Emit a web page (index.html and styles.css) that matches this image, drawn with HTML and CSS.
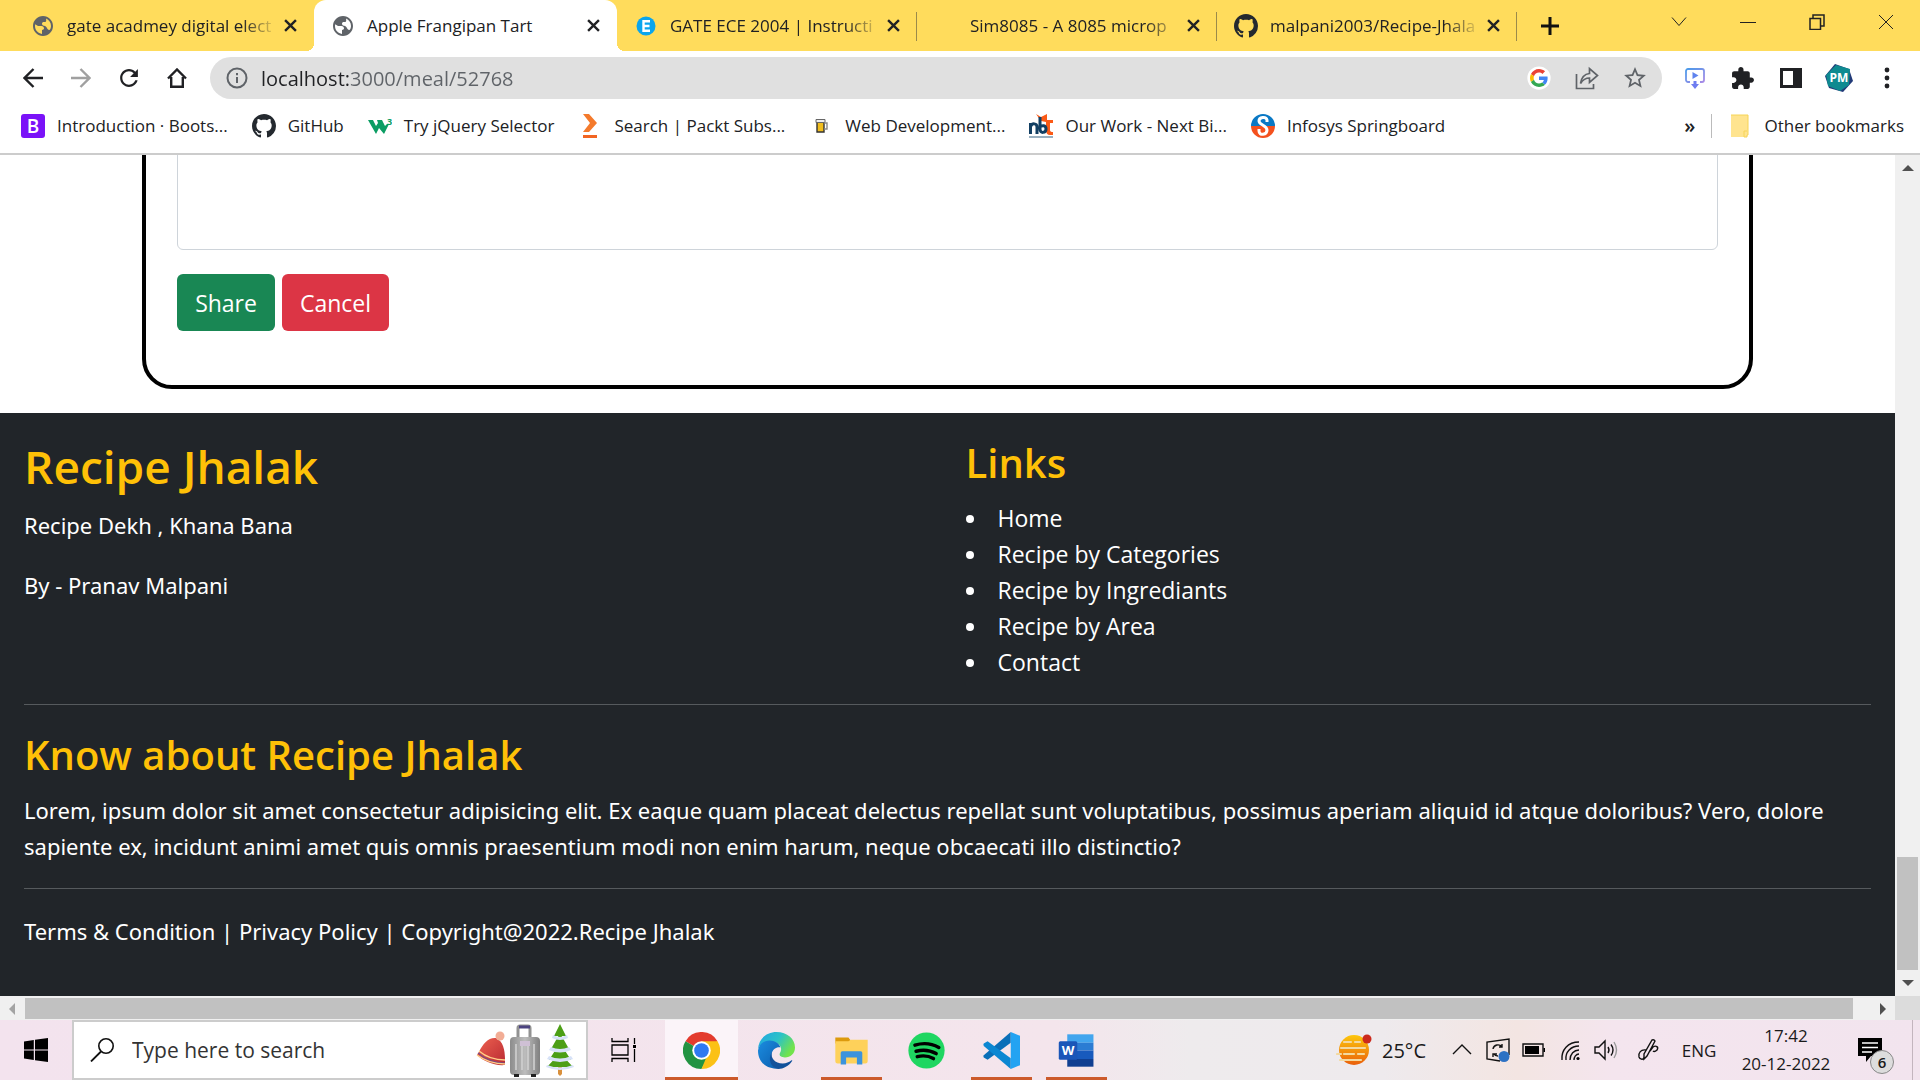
FILE: index.html
```html
<!DOCTYPE html>
<html lang="en">
<head>
<meta charset="utf-8">
<title>Apple Frangipan Tart</title>
<link rel="stylesheet" href="styles.css">
</head>
<body>
<svg class="defs" aria-hidden="true">
  <symbol id="globe" viewBox="0 0 24 24"><path d="M12 2C6.480 2 2 6.480 2 12s4.480 10 10 10 10-4.480 10-10S17.520 2 12 2zm-1 17.930c-3.950-.490-7-3.850-7-7.930 0-.620.080-1.210.210-1.790L7 12h3.500c1.500 0 2.500 1 2.500 2.300 0 1.200-1 1.700-2 1.700v3.930zm5.500-4.930c-.700-2-2-3-3.500-3.200-1.500-.200-2-1-2-2.200 0-1 .700-1.600 2-1.600h1.200c1 0 1.300-1 .800-3.400 2.930 1.190 5 4.060 5 7.410 0 1.500-.500 3-1.500 4-.800 0-1.500-.300-2-1.010z"/></symbol>
  <symbol id="x" viewBox="0 0 12 12"><path d="M1 1l10 10M11 1L1 11" stroke="currentColor" stroke-width="2.200" fill="none"/></symbol>
  <symbol id="github" viewBox="0 0 16 16"><path d="M8 0C3.580 0 0 3.580 0 8c0 3.540 2.290 6.530 5.470 7.590.4.070.55-.17.55-.38 0-.19-.01-.82-.01-1.490-2.010.37-2.530-.49-2.690-.94-.09-.23-.48-.94-.82-1.130-.28-.15-.68-.52-.01-.53.63-.01 1.080.58 1.230.82.72 1.210 1.870.87 2.330.66.070-.52.28-.87.51-1.070-1.780-.2-3.640-.89-3.640-3.950 0-.87.31-1.590.82-2.150-.08-.2-.36-1.020.08-2.120 0 0 .67-.21 2.200.82.64-.18 1.320-.27 2-.27s1.360.09 2 .27c1.530-1.040 2.200-.82 2.200-.82.44 1.100.16 1.920.08 2.120.51.56.82 1.270.82 2.150 0 3.070-1.870 3.750-3.650 3.950.29.25.54.73.54 1.480 0 1.070-.01 1.930-.01 2.200 0 .21.15.46.55.38A8.010 8.010 0 0 0 16 8c0-4.420-3.580-8-8-8z"/></symbol>
</svg>

<header class="chrome">
  <div class="tabstrip">
    <div class="tabs">
      <div class="tab">
        <svg class="tab-icon gray"><use href="#globe"/></svg>
        <span class="tab-title fade">gate acadmey digital elect</span>
        <button class="tab-close" aria-label="Close tab"><svg><use href="#x"/></svg></button>
      </div>
      <div class="tab active">
        <svg class="tab-icon gray"><use href="#globe"/></svg>
        <span class="tab-title">Apple Frangipan Tart</span>
        <button class="tab-close" aria-label="Close tab"><svg><use href="#x"/></svg></button>
      </div>
      <div class="tab divided">
        <svg class="tab-icon" viewBox="0 0 24 24"><circle cx="12" cy="12" r="9.500" fill="#0aa5ee"/><path d="M16 7.300H9.500v9.400H16M9.500 12h6" stroke="#fff" stroke-width="2.400" fill="none"/></svg>
        <span class="tab-title fade">GATE ECE 2004 | Instructi</span>
        <button class="tab-close" aria-label="Close tab"><svg><use href="#x"/></svg></button>
      </div>
      <div class="tab divided">
        <span class="tab-icon"></span>
        <span class="tab-title fade">Sim8085 - A 8085 microp</span>
        <button class="tab-close" aria-label="Close tab"><svg><use href="#x"/></svg></button>
      </div>
      <div class="tab divided">
        <svg class="tab-icon dark"><use href="#github"/></svg>
        <span class="tab-title fade">malpani2003/Recipe-Jhala</span>
        <button class="tab-close" aria-label="Close tab"><svg><use href="#x"/></svg></button>
      </div>
    </div>
    <button class="new-tab" aria-label="New tab"><svg viewBox="0 0 18 18"><path d="M9 0v18M0 9h18" stroke="#111" stroke-width="3"/></svg></button>
    <div class="window-controls">
      <button aria-label="Search tabs"><svg viewBox="0 0 16 16"><path d="M1 3.500l7 8 7-8"/></svg></button>
      <button aria-label="Minimize"><svg viewBox="0 0 16 16"><path d="M0 8.500h16"/></svg></button>
      <button aria-label="Restore"><svg viewBox="0 0 16 16"><path d="M1 4.500h10.500v11H1zM4 4V1h11v11h-3.500" stroke-width="1.500"/></svg></button>
      <button aria-label="Close"><svg viewBox="0 0 16 16"><path d="M1 1l14 14M15 1L1 15"/></svg></button>
    </div>
  </div>

  <div class="toolbar">
    <nav class="nav-buttons">
      <button aria-label="Back"><svg viewBox="0 0 20 20"><path d="M20 10H2M10.500 1L1.500 10l9 9" stroke="#202124"/></svg></button>
      <button aria-label="Forward"><svg viewBox="0 0 20 20"><path d="M0 10h18M9.500 1l9 9-9 9" stroke="#a0a0a0"/></svg></button>
      <button aria-label="Reload"><svg viewBox="3 3 18 18"><path class="solid" d="M17.650 6.350C16.200 4.900 14.210 4 12 4c-4.420 0-7.990 3.580-7.990 8s3.570 8 7.990 8c3.730 0 6.840-2.550 7.730-6h-2.080c-.820 2.330-3.040 4-5.650 4-3.310 0-6-2.690-6-6s2.690-6 6-6c1.660 0 3.140.690 4.220 1.780L13 11h7V4l-2.350 2.350z"/></svg></button>
      <button aria-label="Home"><svg viewBox="0 0 20 20"><path d="M1 10.500L10 1.500l9 9M4.200 9v9.800h11.600V9" stroke="#202124"/></svg></button>
    </nav>
    <div class="omnibox">
      <svg class="icon22" viewBox="0 0 22 22"><circle cx="11" cy="11" r="9.500" fill="none" stroke="#5f6368" stroke-width="2"/><path d="M11 10v6M11 6v2.200" stroke="#5f6368" stroke-width="2"/></svg>
      <input class="url" type="text" aria-label="Address" value="localhost:3000/meal/52768">
      <button aria-label="Google"><svg class="icon24" viewBox="-8 -8 64 64"><circle cx="24" cy="24" r="31" fill="#fff"/><path fill="#EA4335" d="M24 9.500c3.540 0 6.710 1.220 9.210 3.600l6.850-6.850C35.900 2.380 30.470 0 24 0 14.620 0 6.510 5.380 2.560 13.220l7.980 6.190C12.430 13.720 17.740 9.500 24 9.500z"/><path fill="#4285F4" d="M46.980 24.550c0-1.570-.15-3.090-.38-4.550H24v9.020h12.940c-.58 2.960-2.260 5.480-4.780 7.180l7.730 6c4.510-4.180 7.090-10.360 7.090-17.650z"/><path fill="#FBBC05" d="M10.530 28.590c-.48-1.450-.76-2.990-.76-4.590s.27-3.140.76-4.590l-7.980-6.190C.92 16.460 0 20.120 0 24c0 3.880.92 7.540 2.560 10.780l7.970-6.190z"/><path fill="#34A853" d="M24 48c6.480 0 11.930-2.130 15.890-5.810l-7.730-6c-2.150 1.450-4.920 2.300-8.160 2.300-6.260 0-11.570-4.220-13.470-9.910l-7.980 6.190C6.510 42.620 14.620 48 24 48z"/></svg></button>
      <button aria-label="Share this page"><svg class="icon24" viewBox="0 0 24 24"><path d="M1.500 8v14.500h17V18M5.500 17.500c1-6.500 4-9.500 9-10V2.500l8 7-8 7v-4.500c-4 0-6.500 1.500-9 5.500z" fill="none" stroke="#5f6368" stroke-width="1.700"/></svg></button>
      <button aria-label="Bookmark this page"><svg class="icon24" viewBox="1 1 22 22"><path fill="#5f6368" d="M22 9.240l-7.190-.620L12 2 9.190 8.630 2 9.240l5.460 4.730L5.820 21 12 17.270 18.180 21l-1.630-7.030L22 9.240zM12 15.400l-3.760 2.270 1-4.280-3.320-2.880 4.380-.380L12 6.100l1.710 4.040 4.380.380-3.320 2.880 1 4.280L12 15.400z"/></svg></button>
    </div>
    <div class="extensions">
      <button aria-label="Video downloader"><svg class="icon24" viewBox="0 0 24 24"><defs><linearGradient id="vd" x2="1" y2="1"><stop stop-color="#4a9bea"/><stop offset="1" stop-color="#a98be6"/></linearGradient></defs><path d="M7 16H5a2 2 0 01-2-2V5a2 2 0 012-2h14a2 2 0 012 2v9a2 2 0 01-2 2h-2" fill="none" stroke="url(#vd)" stroke-width="1.800"/><path d="M9.500 6l6 3.500-6 3.500z" fill="#5f83ee"/><path d="M10.500 15h3v3h2.500l-4 5-4-5h2.500z" fill="#6f7df0"/></svg></button>
      <button aria-label="Extensions"><svg class="icon24" viewBox="1 0 23 23"><path fill="#202124" d="M20.500 11H19V7c0-1.100-.9-2-2-2h-4V3.500C13 2.120 11.880 1 10.500 1S8 2.120 8 3.500V5H4c-1.100 0-1.990.9-1.990 2v3.800H3.500c1.490 0 2.700 1.210 2.700 2.700s-1.210 2.700-2.700 2.700H2V20c0 1.100.9 2 2 2h3.800v-1.500c0-1.490 1.210-2.700 2.700-2.700 1.490 0 2.700 1.210 2.700 2.700V22H17c1.100 0 2-.9 2-2v-4h1.500c1.380 0 2.500-1.120 2.500-2.500S21.880 11 20.500 11z"/></svg></button>
      <button aria-label="Side panel"><svg class="icon24" viewBox="0 0 24 24"><path fill="#202124" fill-rule="evenodd" d="M1 2h22v20H1zM4 5v14h10V5z"/></svg></button>
      <button aria-label="Profile"><svg class="avatar" viewBox="0 0 28 28"><path d="M10 0l14 5 4 12-10 11-14-4L0 12z" fill="#223a78"/><path d="M11 1l14 4-1 16-9 6-12-5-2-11z" fill="#0f8a90"/><text x="14" y="18" text-anchor="middle" font-size="12" font-weight="700" fill="#fff">PM</text></svg></button>
      <button aria-label="Menu"><svg class="icon24" viewBox="0 0 24 24" fill="#202124"><circle cx="12" cy="4" r="2.400"/><circle cx="12" cy="12" r="2.400"/><circle cx="12" cy="20" r="2.400"/></svg></button>
    </div>
  </div>

  <nav class="bookmarks">
    <a href="#"><svg viewBox="0 0 24 24"><rect width="24" height="24" rx="3" fill="#7a12f8"/><text x="12" y="19" text-anchor="middle" font-size="19" font-weight="600" fill="#fff">B</text></svg>Introduction · Boots...</a>
    <a href="#"><svg class="dark"><use href="#github"/></svg>GitHub</a>
    <a href="#"><svg viewBox="0 0 24 24"><path d="M0 6h5l3 6 2-3-1-3h5l3 6 2-2h2l-5 10-5-6-3 6z" fill="#0b9d63"/><text x="19" y="11" font-size="9" font-weight="700" fill="#0b9d63">3</text></svg>Try jQuery Selector</a>
    <a href="#"><svg viewBox="0 0 24 24"><path d="M5 0h6l8 9-8 9H5l7-9z" fill="#f47a2c"/><path d="M5 21h14v3H5z" fill="#f26522"/></svg>Search | Packt Subs...</a>
    <a href="#"><svg viewBox="0 0 24 24"><path d="M8 7h7v11H8z" fill="#f0bd1e" stroke="#333" stroke-width="1.400"/><path d="M7 5.500h9v3H7z" fill="#eee" stroke="#666" stroke-width="1"/><path d="M15 9h3v6h-3" fill="none" stroke="#888" stroke-width="1.400"/></svg>Web Development...</a>
    <a href="#"><svg viewBox="0 0 24 24"><path d="M7 0l5 3 6-3v6h6v3h-3v7q0 2 3 2v3h-3q-4 0-4-5V8l-5-1z" fill="#fb5a16"/><path d="M1.500 20V9M2 12c1-3 6-3 6 1v7M11 3v12c0 5 6 4 6 0s-4-4-6-2" fill="none" stroke="#123f63" stroke-width="3"/><path d="M0 23h24" stroke="#7896ab" stroke-width="1.500"/></svg>Our Work - Next Bi...</a>
    <a href="#"><svg viewBox="0 0 24 24"><path d="M0 12a12 12 0 0124 0z" fill="#0a79c5"/><path d="M0 12a12 12 0 0024 0z" fill="#f4511e"/><path d="M16 8V6c-1-4-8-3-8 1s8 4 8 9-8 6-8 1v-2" fill="none" stroke="#fff" stroke-width="3"/></svg>Infosys Springboard</a>
    <div class="bookmarks-end">
      <button aria-label="More bookmarks">»</button>
      <a class="other" href="#"><svg viewBox="0 0 24 24"><path d="M3 1h17v20h-1v2H3z" fill="#ffe48f"/><path d="M3 1h17v20h-1v2h-3v-6h3" fill="none" stroke="#f6d456" stroke-width="1"/></svg>Other bookmarks</a>
    </div>
  </nav>
</header>

<div class="viewport">
  <main class="page">
    <form class="share-card">
      <textarea aria-label="Message" rows="8"></textarea>
      <div class="actions">
        <button class="btn success" type="button">Share</button>
        <button class="btn danger" type="button">Cancel</button>
      </div>
    </form>
    <footer class="footer">
      <div class="columns">
        <section>
          <h1>Recipe Jhalak</h1>
          <p>Recipe Dekh , Khana Bana</p>
          <p>By - Pranav Malpani</p>
        </section>
        <section>
          <h2>Links</h2>
          <ul>
            <li><a href="#">Home</a></li>
            <li><a href="#">Recipe by Categories</a></li>
            <li><a href="#">Recipe by Ingrediants</a></li>
            <li><a href="#">Recipe by Area</a></li>
            <li><a href="#">Contact</a></li>
          </ul>
        </section>
      </div>
      <hr>
      <section>
        <h2>Know about Recipe Jhalak</h2>
        <p class="about">Lorem, ipsum dolor sit amet consectetur adipisicing elit. Ex eaque quam placeat delectus repellat sunt voluptatibus, possimus aperiam aliquid id atque doloribus? Vero, dolore sapiente ex, incidunt animi amet quis omnis praesentium modi non enim harum, neque obcaecati illo distinctio?</p>
      </section>
      <hr>
      <p class="legal">Terms &amp; Condition | Privacy Policy | Copyright@2022.Recipe Jhalak</p>
    </footer>
  </main>
  <div class="vscroll">
    <svg viewBox="0 0 12 6"><path d="M0 6l6-6 6 6z" fill="#505050"/></svg>
    <div class="track"><div class="vthumb"></div></div>
    <svg viewBox="0 0 12 6"><path d="M0 0h12L6 6z" fill="#505050"/></svg>
  </div>
  <div class="hscroll">
    <svg viewBox="0 0 6 12"><path d="M6 0v12L0 6z" fill="#a3a3a3"/></svg>
    <div class="hthumb"></div>
    <svg viewBox="0 0 6 12"><path d="M0 0l6 6-6 6z" fill="#505050"/></svg>
  </div>
  <div class="corner"></div>
</div>

<div class="taskbar">
  <button class="start" aria-label="Start"><svg viewBox="0 0 24 24"><path d="M0 3.400L9.800 2v9.400H0zM11 1.800L24 0v11.400H11zM0 12.600h9.800V22L0 20.600zM11 12.600h13V24l-13-1.800z"/></svg></button>
  <label class="search">
    <svg class="lens" viewBox="0 0 24 24"><circle cx="16" cy="8" r="7.200" fill="none" stroke="#111" stroke-width="1.600"/><path d="M11 13.500L1 23.500" stroke="#111" stroke-width="1.800"/></svg>
    <input type="text" aria-label="Search" placeholder="Type here to search">
    <svg class="holiday" viewBox="0 0 98 54">
      <defs>
        <linearGradient id="case" x2="1"><stop stop-color="#8c8c8c"/><stop offset=".5" stop-color="#bdbdbd"/><stop offset="1" stop-color="#808080"/></linearGradient>
        <linearGradient id="hat" x2="1" y2="1"><stop stop-color="#ee6250"/><stop offset="1" stop-color="#b92a32"/></linearGradient>
      </defs>
      <path d="M3 29C7 20 13 14 20 15c7 3 9 12 9 21v6C18 43 7 38 1 32z" fill="url(#hat)"/>
      <path d="M2 30c8 7 16 10 27 10" stroke="#7a4a80" stroke-width="1.200" fill="none"/><path d="M3 28c7 6 15 9 26 9M1 32c8 6 17 9 28 9" stroke="#ffd08a" stroke-width="1.300" fill="none"/>
      <circle cx="24" cy="13" r="4.500" fill="#f2ad95"/>
      <path d="M42 17V5q0-2 2-2h8q2 0 2 2v12" fill="none" stroke="#929292" stroke-width="3"/><path d="M43 2.500h11v3H43z" fill="#4b4380"/>
      <rect x="34" y="14" width="30" height="38" rx="4" fill="url(#case)"/><path d="M40 21v26M46 21v26M52 21v26M58 21v26" stroke="#d0d0d0" stroke-width="1.600"/><rect x="44" y="18" width="10" height="5" fill="#cfc0d5"/><path d="M38 51h5v3h-5zM55 51h5v3h-5z" fill="#222"/>
      <path d="M82 42h4v9l-2 2-2-2z" fill="#d9903c"/>
      <path d="M84 1l6 12H78zM84 10l9 16H75zM84 20l11 17H73zM84 30l13 14H71z" fill="#4c9f16"/>
      <path d="M77 12q7 4 14 0l1 3q-8 4-16 0zM75 24q9 4 18 0l2 3q-11 5-22 0zM73 33q11 5 22 0l2 3q-13 6-26 0zM71 42q13 5 26 0l1 2q-14 6-28 0z" fill="#d7e2f8"/>
    </svg>
  </label>
  <button class="taskview" aria-label="Task view"><svg viewBox="0 0 26 24"><path d="M1 0v3.500h16V0M1 24v-3.500h16V24M1 7h16v10H1zM23.500 0v6M23.500 11v13" fill="none" stroke="#000" stroke-width="1.300"/><path d="M22 7h3v3h-3z"/></svg></button>
  <div class="apps">
    <button class="app current" aria-label="Google Chrome"><svg viewBox="0 0 48 48"><path d="M24 24L3.200 12A24 24 0 0144.800 12z" fill="#e33b2e"/><path d="M24 24L3.200 12A24 24 0 0024 48l10-18z" fill="#229342"/><path d="M24 24h10L24 48a24 24 0 0020.800-36H24z" fill="#fbc116"/><circle cx="24" cy="24" r="12" fill="#fff"/><circle cx="24" cy="24" r="9.500" fill="#2f79f1"/></svg></button>
    <button class="app" aria-label="Microsoft Edge"><svg viewBox="0 0 48 48"><defs><linearGradient id="e1" x2="1" y2=".5"><stop stop-color="#21a4e4"/><stop offset=".55" stop-color="#2cc2c7"/><stop offset="1" stop-color="#72e34b"/></linearGradient><linearGradient id="e2" x2="1" y2="1"><stop stop-color="#1b8de0"/><stop offset="1" stop-color="#0b5cad"/></linearGradient></defs><path d="M0 22C1 8 12 0 24 0c14 0 24 9 24 20 0 8-6 13-13 13-5 0-7-2-7-4s2-3 2-7c0-5-6-10-14-10C9 12 3 16 0 22z" fill="url(#e1)"/><path d="M0 24c1-8 7-13 15-13 7 0 13 4 14 9-2-1-9 0-11 7-3 10 4 18 11 20C13 50 0 40 0 24z" fill="url(#e2)"/><path d="M18 26c-2 8 4 15 14 15 5 0 8-2 11-4 1-1 2 0 1 1-4 6-11 10-18 10-9-2-14-12-8-22z" fill="#12519b"/></svg></button>
    <button class="app open" aria-label="File Explorer"><svg viewBox="0 0 48 48"><path d="M3 7h17l3 4-3 4H3z" fill="#dc9a0d"/><path d="M3 12h17l3-2h22v28q0 3-3 3H6q-3 0-3-3z" fill="#fed15a"/><path d="M10 27q0-2 2-2h24q2 0 2 2v15h-7v-9H17v9h-7z" fill="#3c93dc"/></svg></button>
    <button class="app" aria-label="Spotify"><svg viewBox="0 0 48 48"><circle cx="24" cy="24" r="23.500" fill="#1fd661"/><path d="M9 17c10-3 22-2 31 3M10.500 25c9-2.500 18-1.500 26 3M12 32c8-2 15-1 21 2.500" fill="none" stroke="#000" stroke-width="4.500" stroke-linecap="round"/></svg></button>
    <button class="app open" aria-label="Visual Studio Code"><svg viewBox="0 0 48 48"><path d="M36 0v14L6 36l-5-3q-1-1 0-3z" fill="#0a6fb8"/><path d="M36 48V34L6 12l-5 3q-1 1 0 3z" fill="#0b87d2"/><path d="M36 0l12 5v38l-12 5z" fill="#23a3f2"/></svg></button>
    <button class="app open" aria-label="Word"><svg viewBox="0 0 48 48"><path d="M12 3h34v11H12z" fill="#42a5ee"/><path d="M12 14h34v10H12z" fill="#2b7cd3"/><path d="M12 24h34v11H12z" fill="#185abd"/><path d="M12 35h34v10H12z" fill="#103f91"/><rect x="1" y="12" width="24" height="24" rx="2" fill="#1a56b8"/><text x="13" y="30" text-anchor="middle" font-size="17" font-weight="700" fill="#fff">W</text></svg></button>
  </div>
  <div class="tray">
    <button class="weather"><svg viewBox="0 0 36 36"><defs><linearGradient id="sun" x2="0" y2="1"><stop stop-color="#fdc70c"/><stop offset="1" stop-color="#ea5f0b"/></linearGradient></defs><circle cx="18" cy="18" r="15" fill="url(#sun)"/><path d="M8 10h7M19 10h5M5 16h24M8 22h10M22 22h6M1 22h4M4 28h21" stroke="#f3d9a0" stroke-width="2.200" stroke-linecap="round"/><circle cx="31" cy="7" r="4.500" fill="#cb2a1d"/></svg>25°C</button>
    <button aria-label="Show hidden icons"><svg viewBox="0 0 24 24"><path d="M3 16l9-9 9 9"/></svg></button>
    <button aria-label="Updates"><svg viewBox="0 0 24 24"><path d="M14 23L1 21V4l22-3v16"/><path d="M7 11a5 5 0 019-2M16 6v3h-3M12 18q-3 0-4-2M7 19v-3h4"/><circle cx="18" cy="18.500" r="5.500" fill="#2d72c4" stroke="none"/></svg></button>
    <button aria-label="Battery"><svg viewBox="0 0 24 24"><path d="M1 6h20v12H1z"/><path d="M3 8h14v8H3zM21.500 10H23v4h-1.500z" fill="#000" stroke="none"/></svg></button>
    <button aria-label="Network"><svg viewBox="0 0 24 24"><path d="M4 22C3 12 10 4 21 4M8 22c-1-8 5-14 13-14M12 22c0-6 4-10 9-10M16 22c0-3 2-6 5-6"/><circle cx="20" cy="20.500" r="1.600" fill="#000" stroke="none"/></svg></button>
    <button aria-label="Volume"><svg viewBox="0 0 24 24"><path d="M1 9h4l6-6v18l-6-6H1zM14 9q2 3 0 6M17 6.500q4 5.500 0 11"/><path d="M20 4q5 8 0 16" stroke="#999"/></svg></button>
    <button class="ink" aria-label="Ink workspace"><svg viewBox="0 0 24 24"><path d="M16 2q2-1 3 1L11 18l-3 3 0-5zM10 12c-5-1-8 3-7 7 1 3 5 3 5 0M14 13l3-4c3-2 6 0 4 3-1 1-3 2-4 1"/></svg></button>
    <button class="lang">ENG</button>
    <button class="clock"><span>17:42</span><span>20-12-2022</span></button>
    <button class="notify" aria-label="Notifications"><svg viewBox="0 0 24 24"><path d="M0 0h24v18H13l-5 6v-6H0z" fill="#000" stroke="none"/><path d="M4 5h16M4 9.500h16M4 14h10" stroke="#fff"/></svg><span class="badge">6</span></button>
  </div>
</div>
</body>
</html>
```
FILE: styles.css
```css
* { box-sizing: border-box; }
body {
  margin: 0;
  height: 100vh;
  display: flex;
  flex-direction: column;
  overflow: hidden;
  background: #fff;
  color: #202124;
  font-family: "Open Sans", "Noto Sans", sans-serif;
  font-size: 17px;
}
button, input, textarea { font: inherit; color: inherit; }
button { border: 0; padding: 0; background: none; display: flex; align-items: center; justify-content: center; }
a { color: inherit; text-decoration: none; }
svg { display: block; flex: none; }
.defs { position: absolute; width: 0; height: 0; }
.gray { fill: #5f6368; }
.dark { fill: #24292f; }

/* Tab strip */
.tabstrip { display: flex; height: 51px; background: #ffdc5c; }
.tabs { display: flex; padding-left: 14px; }
.tab { position: relative; display: flex; align-items: center; width: 300px; padding: 0 12px 0 17px; }
.active { width: 303px; background: #fff; border-radius: 12px 12px 0 0; }
.active::before, .active::after {
  content: "";
  position: absolute;
  bottom: 0;
  width: 8px;
  height: 8px;
  background: radial-gradient(circle at 0 0, transparent 8px, #fff 8px);
}
.active::before { left: -8px; }
.active::after { right: -8px; background: radial-gradient(circle at 100% 0, transparent 8px, #fff 8px); }
.divided::after { content: ""; position: absolute; right: 0; top: 12px; width: 1px; height: 29px; background: #9b8a4a; }
.tab-icon { width: 24px; height: 24px; flex: none; }
.tab-title {
  flex: 1;
  min-width: 0;
  margin-left: 12px;
  white-space: nowrap;
  line-height: 24px;
}
.fade { mask-image: linear-gradient(90deg, #000 calc(100% - 36px), transparent); }
.tab-close { width: 24px; height: 24px; }
.tab-close svg { width: 13px; height: 13px; }
.new-tab { width: 60px; margin-left: 3px; }
.new-tab svg { width: 18px; height: 18px; }
.window-controls { display: flex; margin-left: auto; }
.window-controls button { width: 69px; height: 43px; }
.window-controls svg { width: 16px; height: 16px; fill: none; stroke: #222; }

/* Address bar */
.toolbar { display: flex; align-items: center; height: 54px; padding: 0 9px; }
.nav-buttons { display: flex; width: 201px; }
.nav-buttons button { width: 48px; height: 42px; }
.nav-buttons svg { width: 20px; height: 20px; fill: none; stroke-width: 2.4; }
.nav-buttons .solid { fill: #202124; }
.omnibox { flex: 1; display: flex; align-items: center; height: 42px; border-radius: 21px; background: #e0e0e0; padding-left: 16px; padding-right: 3px; }
.url {
  flex: 1;
  min-width: 0;
  height: 42px;
  border: 0;
  padding: 0;
  margin-left: 13px;
  outline: 0;
  font-size: 20px;
  background: linear-gradient(90deg, #202124 88px, #5f6368 88px);
  background-clip: text;
  -webkit-text-fill-color: transparent;
}
.omnibox button, .extensions button { width: 48px; height: 42px; }
.extensions { display: flex; margin-left: 9px; }
.icon22 { width: 22px; height: 22px; }
.icon24 { width: 24px; height: 24px; }
.avatar { width: 28px; height: 28px; }

/* Bookmarks */
.bookmarks { display: flex; align-items: center; gap: 24px; height: 50px; padding: 0 16px 7px 21px; border-bottom: 2px solid #ccc; white-space: nowrap; }
.bookmarks a { display: flex; align-items: center; gap: 12px; }
.bookmarks svg { width: 24px; height: 24px; }
.bookmarks-end { display: flex; align-items: center; gap: 16px; margin-left: auto; }
.bookmarks-end button { font-weight: 600; font-size: 20px; }
.other { border-left: 1px solid #bbb; padding-left: 16px; }

/* Viewport with its scrollbars */
.viewport { flex: 1; min-height: 0; display: grid; grid-template: minmax(0, 1fr) 24px / minmax(0, 1fr) 25px; }
.page { display: flex; flex-direction: column; justify-content: flex-end; overflow: hidden; font-size: 23px; line-height: 36px; }
.vscroll { display: flex; flex-direction: column; align-items: center; background: #f0f0f0; padding: 10px 2px; }
.vscroll svg { width: 12px; height: 6px; }
.track { flex: 1; width: 100%; padding: 10px 0; display: flex; flex-direction: column; justify-content: flex-end; }
.vthumb { height: 113px; background: #c1c1c1; }
.hscroll { display: flex; align-items: center; background: #f0f0f0; padding: 2px 9px 1px; }
.hscroll svg { width: 6px; height: 12px; }
.hthumb { flex: 1; height: 100%; margin: 0 27px 0 10px; background: #c1c1c1; }
.corner { background: #dcdcdc; }

/* Share form */
.share-card { flex: none; width: 85%; margin: 0 auto 24px; padding: 24px 31px 54px; border: 4px solid #000; border-radius: 30px; }
.share-card textarea { display: block; width: 100%; border: 1px solid #ced4da; border-radius: 6px; padding: 9px 18px; resize: none; background: #fff; }
.actions { display: flex; gap: 7px; margin-top: 24px; }
.btn { height: 57px; padding: 0 18px; border-radius: 6px; color: #fff; }
.success { background: #198754; }
.danger { background: #dc3545; }

/* Footer */
.footer { flex: none; padding: 24px 24px 47px; background: #212529; color: #fff; }
.columns { display: grid; grid-template-columns: 1fr 1fr; column-gap: 36px; }
.footer h1, .footer h2 { margin: 0 0 12px; color: #ffc107; font-weight: 600; }
.footer h1 { font-size: 46px; line-height: 58px; }
.footer h2 { font-size: 40px; line-height: 51px; }
.footer p { margin: 0 0 24px; font-family: "Noto Sans", "Open Sans", sans-serif; font-size: 22px; }
.footer ul { margin: 0; padding: 0; list-style-position: inside; }
.footer hr { margin: 24px 0; border: 0; height: 1px; background: #565a5d; }
.footer .about, .footer .legal { margin: 0; }

/* Taskbar */
.taskbar { display: flex; height: 60px; flex: none; color: #1a1a1a; background: linear-gradient(90deg, #f3e3ee 0%, #f4e5ec 55%, #eeebed 62%, #eeeaed 72%, #f3e5e2 79%, #f4e5ee 84%, #f2e4ee 100%); }
.start { width: 72px; }
.start svg { width: 24px; height: 24px; }
.search { display: flex; align-items: center; width: 516px; border: 2px solid #ccc; background: #fff; padding: 0 12px 0 16px; }
.lens { width: 24px; height: 24px; }
.search input { flex: 1; min-width: 0; border: 0; outline: 0; padding: 0; margin-left: 18px; font-size: 21px; background: none; }
.search input::placeholder { color: #333; opacity: 1; }
.holiday { width: 98px; height: 54px; }
.taskview { width: 72px; }
.taskview svg { width: 26px; height: 24px; }
.apps { display: flex; gap: 2px; margin-left: 5px; }
.app { position: relative; width: 73px; }
.app svg { width: 37px; height: 37px; }
.current { background: #fbf4f9; }
.open::after, .current::after { content: ""; position: absolute; bottom: 0; left: 6px; right: 6px; height: 3px; background: #cc5a2b; }
.current::after { left: 0; right: 0; }
.tray { display: flex; margin-left: auto; margin-right: 7px; padding-right: 18px; border-right: 1px solid #c3b5be; }
.tray button { width: 36px; }
.tray svg { width: 24px; height: 24px; fill: none; stroke: #111; stroke-width: 1.4; }
.tray .weather { width: 94px; gap: 10px; margin-right: 16px; font-size: 20px; }
.tray .weather svg { width: 36px; height: 36px; stroke: none; }
.tray .ink { width: 48px; }
.tray .lang { width: 54px; }
.tray .clock { width: 120px; flex-direction: column; line-height: 28px; }
.tray .notify { position: relative; width: 48px; }
.badge { position: absolute; right: 0; bottom: 6px; width: 24px; height: 24px; border: 1px solid #888; border-radius: 50%; background: #ddd; line-height: 22px; font-weight: 600; font-size: 15px; text-align: center; }
```
